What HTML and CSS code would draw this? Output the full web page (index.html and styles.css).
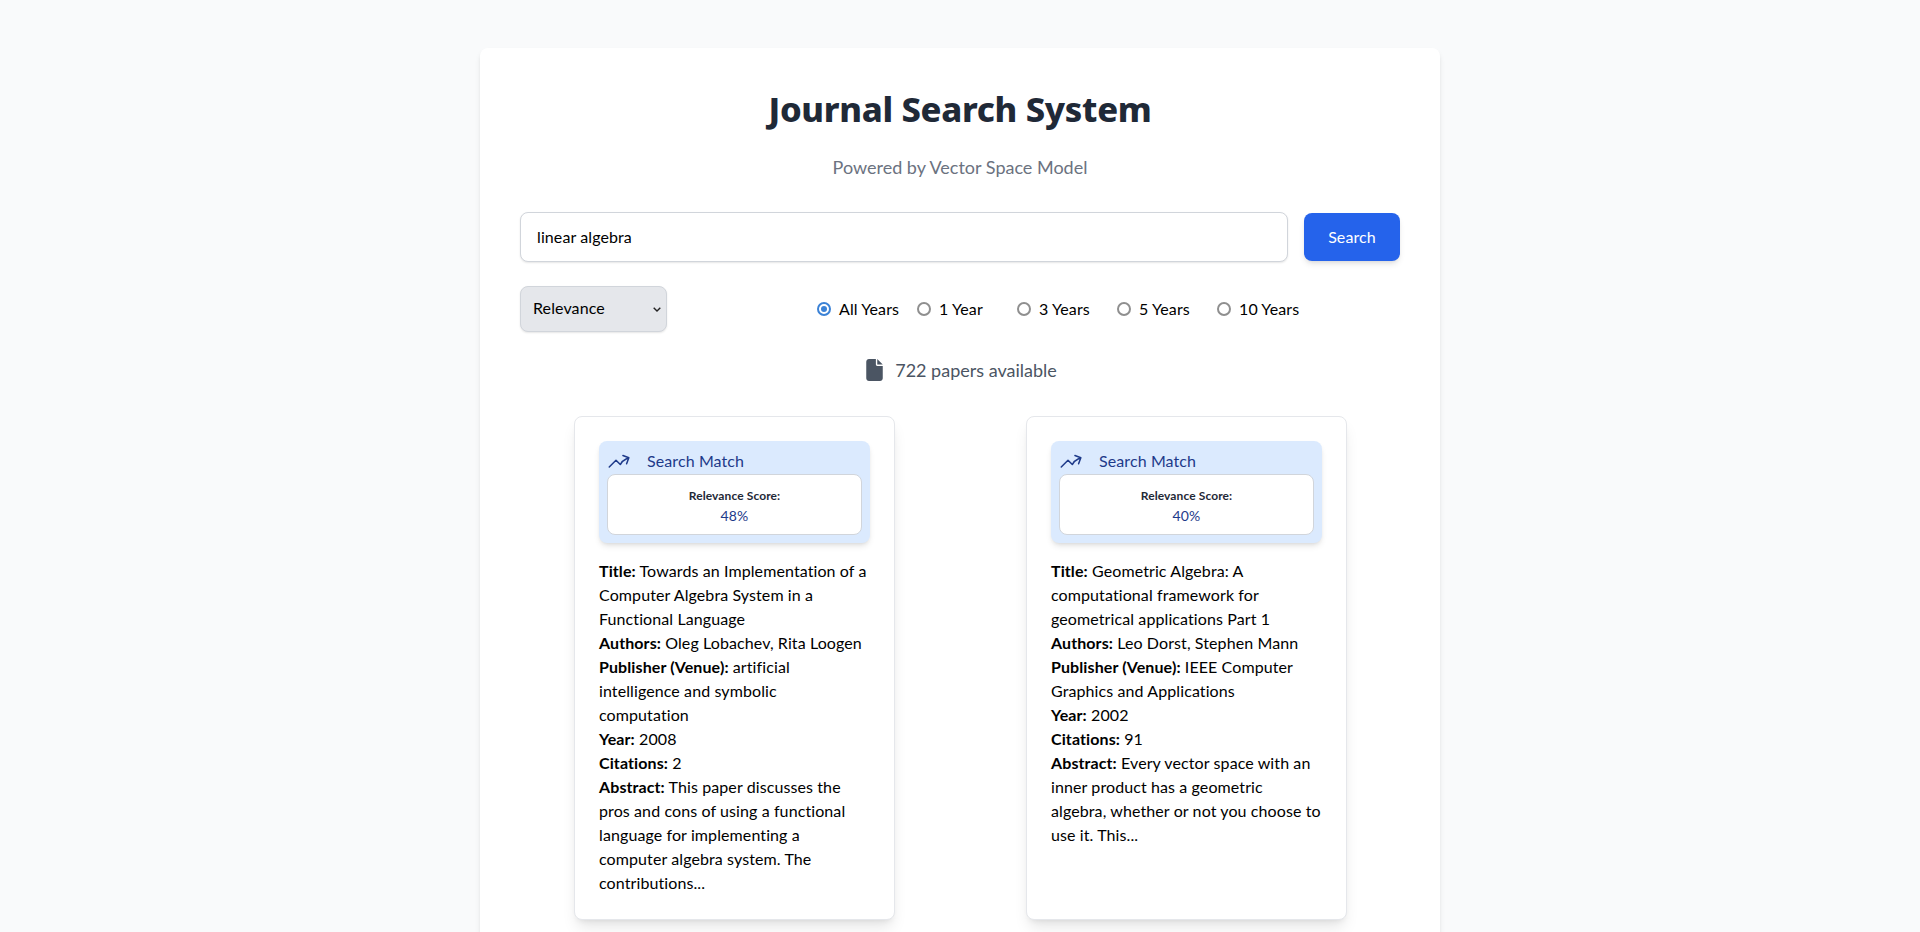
FILE: index.html
```html
<!DOCTYPE html>
<html lang="en">
<head>
<meta charset="utf-8">
<title>Journal Search System</title>
<link rel="stylesheet" href="styles.css">
</head>
<body>
<main class="panel">
  <header class="masthead">
    <h1 class="title">Journal Search System</h1>
    <p class="subtitle">Powered by Vector Space Model</p>
  </header>
  <form class="search-row">
    <input class="search-input" type="text" value="linear algebra">
    <button class="search-button" type="button">Search</button>
  </form>
  <div class="filter-row">
    <select class="sort-select">
      <option>Relevance</option>
      <option>Citations</option>
      <option>Year</option>
    </select>
    <div class="year-group">
      <label class="year-option"><input class="year-radio" type="radio" name="years" checked>All Years</label>
      <label class="year-option"><input class="year-radio" type="radio" name="years">1 Year</label>
      <label class="year-option"><input class="year-radio" type="radio" name="years">3 Years</label>
      <label class="year-option"><input class="year-radio" type="radio" name="years">5 Years</label>
      <label class="year-option"><input class="year-radio" type="radio" name="years">10 Years</label>
    </div>
  </div>
  <p class="paper-count">
    <svg class="file-icon" viewBox="0 0 384 512" aria-hidden="true"><path d="M0 64C0 28.7 28.7 0 64 0H224V128c0 17.7 14.3 32 32 32H384V448c0 35.3-28.7 64-64 64H64c-35.3 0-64-28.7-64-64V64zm384 64H256V0L384 128z"/></svg>
    722 papers available
  </p>
  <section class="results">
    <div class="cell">
      <article class="card">
        <div class="match">
          <div class="match-head">
            <svg class="trend-icon" viewBox="0 0 24 24" aria-hidden="true"><path d="M2.25 18 9 11.25l4.306 4.306a11.95 11.95 0 0 1 5.814-5.518l2.74-1.22m0 0-5.94-2.281m5.94 2.28-2.28 5.941"/></svg>
            <span>Search Match</span>
          </div>
          <div class="score">
            <div class="score-label">Relevance Score:</div>
            <div class="score-value">48%</div>
          </div>
        </div>
        <div class="meta">
          <div><b>Title:</b> Towards an Implementation of a Computer Algebra System in a Functional Language</div>
          <div><b>Authors:</b> Oleg Lobachev, Rita Loogen</div>
          <div><b>Publisher (Venue):</b> artificial intelligence and symbolic computation</div>
          <div><b>Year:</b> 2008</div>
          <div><b>Citations:</b> 2</div>
          <div><b>Abstract:</b> This paper discusses the pros and cons of using a functional language for implementing a computer algebra system. The contributions...</div>
        </div>
      </article>
    </div>
    <div class="cell">
      <article class="card">
        <div class="match">
          <div class="match-head">
            <svg class="trend-icon" viewBox="0 0 24 24" aria-hidden="true"><path d="M2.25 18 9 11.25l4.306 4.306a11.95 11.95 0 0 1 5.814-5.518l2.74-1.22m0 0-5.94-2.281m5.94 2.28-2.28 5.941"/></svg>
            <span>Search Match</span>
          </div>
          <div class="score">
            <div class="score-label">Relevance Score:</div>
            <div class="score-value">40%</div>
          </div>
        </div>
        <div class="meta">
          <div><b>Title:</b> Geometric Algebra: A computational framework for geometrical applications Part 1</div>
          <div><b>Authors:</b> Leo Dorst, Stephen Mann</div>
          <div><b>Publisher (Venue):</b> IEEE Computer Graphics and Applications</div>
          <div><b>Year:</b> 2002</div>
          <div><b>Citations:</b> 91</div>
          <div><b>Abstract:</b> Every vector space with an inner product has a geometric algebra, whether or not you choose to use it. This...</div>
        </div>
      </article>
    </div>
  </section>
</main>
</body>
</html>
```
FILE: styles.css
```css
* { box-sizing: border-box; }
html, body { height: 100%; overflow: hidden; }
body {
  margin: 0;
  padding-top: 48px;
  background: #f9fafb;
  font-family: Lato, sans-serif;
  font-size: 16px;
  line-height: 24px;
  letter-spacing: .1px;
  color: #000;
}
.panel {
  width: 960px;
  margin: 0 auto;
  padding: 40px;
  background: #fff;
  border-radius: 8px;
  box-shadow: 0 4px 6px -1px rgba(0,0,0,.1), 0 2px 4px -2px rgba(0,0,0,.1);
}
.masthead { text-align: center; margin-bottom: 31px; }
.title { margin: 0 0 24px; padding-top: 1px; font-family: "Noto Sans", sans-serif; font-size: 34.5px; line-height: 40px; font-weight: 800; letter-spacing: -.3px; color: #1f2937; }
.subtitle { margin: 0; font-size: 18px; line-height: 28px; letter-spacing: 0; color: #6b7280; }
.search-row { display: flex; align-items: center; gap: 16px; margin-bottom: 24px; }
.search-input {
  flex: 1;
  height: 50px;
  padding: 10px 16px 12px;
  border: 1px solid #d1d5db;
  border-radius: 8px;
  box-shadow: 0 1px 2px rgba(0,0,0,.1);
  font: inherit;
  letter-spacing: inherit;
  color: #000;
  background: #fff;
}
.search-button {
  width: 96px;
  height: 48px;
  border: 0;
  border-radius: 8px;
  background: #2563eb;
  color: #fff;
  font: inherit;
  letter-spacing: inherit;
  box-shadow: 0 4px 6px -1px rgba(0,0,0,.1), 0 2px 4px -2px rgba(0,0,0,.1);
}
.filter-row { display: flex; align-items: center; margin-bottom: 24px; }
.sort-select {
  appearance: none;
  width: 147px;
  height: 46px;
  padding: 0 12px 2px;
  border: 1px solid #d1d5db;
  border-radius: 8px;
  background: #e5e7eb url("data:image/svg+xml,%3Csvg xmlns='http://www.w3.org/2000/svg' width='8' height='5'%3E%3Cpath d='M.7.7 4 4l3.3-3.3' fill='none' stroke='%23222' stroke-width='1.4'/%3E%3C/svg%3E") no-repeat right 5px center;
  font: inherit;
  letter-spacing: inherit;
  color: #000;
  box-shadow: 0 1px 2px rgba(0,0,0,.1);
}
.year-group { display: flex; margin-left: 150px; }
.year-option { display: flex; align-items: center; width: 100px; }
.year-radio {
  appearance: none;
  flex: none;
  display: grid;
  place-items: center;
  width: 14px;
  height: 14px;
  margin: 0 8px 0 0;
  border: 2px solid #8f8f8f;
  border-radius: 50%;
  background: #fff;
}
.year-radio:checked { border-color: #3b82d6; }
.year-radio:checked::before { content: ""; width: 6px; height: 6px; border-radius: 50%; background: #3b82d6; }
.paper-count {
  display: flex;
  align-items: center;
  justify-content: center;
  gap: 12px;
  margin: 0 0 32px;
  padding-left: 3px;
  font-size: 18px;
  line-height: 28px;
  letter-spacing: 0;
  color: #4b5563;
}
.file-icon { width: 17px; height: 22px; fill: #4b5563; }
.results { display: grid; grid-template-columns: 1fr 1fr; gap: 24px; }
.cell { display: flex; justify-content: center; padding-left: 1px; }
.card {
  width: 321px;
  padding: 24px;
  border: 1px solid #e5e7eb;
  border-radius: 8px;
  background: #fff;
  box-shadow: 0 10px 15px -3px rgba(0,0,0,.1), 0 4px 6px -4px rgba(0,0,0,.1);
}
.match {
  padding: 8px;
  border-radius: 8px;
  background: #dbeafe;
  box-shadow: 0 4px 6px -1px rgba(0,0,0,.1), 0 2px 4px -2px rgba(0,0,0,.1);
  margin-bottom: 16px;
}
.match-head { display: flex; align-items: center; gap: 16px; height: 24px; margin-bottom: 1px; color: #1e3a8a; }
.trend-icon { width: 24px; height: 24px; fill: none; stroke: #1e3a8a; stroke-width: 1.5; stroke-linecap: round; stroke-linejoin: round; }
.score {
  padding: 11px 8px 8px;
  text-align: center;
  background: #fff;
  border: 1px solid #d1d5db;
  border-radius: 8px;
  height: 61px;
}
.score-label { font-size: 12px; line-height: 20px; font-weight: 700; letter-spacing: .1px; color: #1f2937; }
.score-value { font-size: 14px; line-height: 20px; color: #1e3a8a; }
.meta b { font-weight: 700; }
```
